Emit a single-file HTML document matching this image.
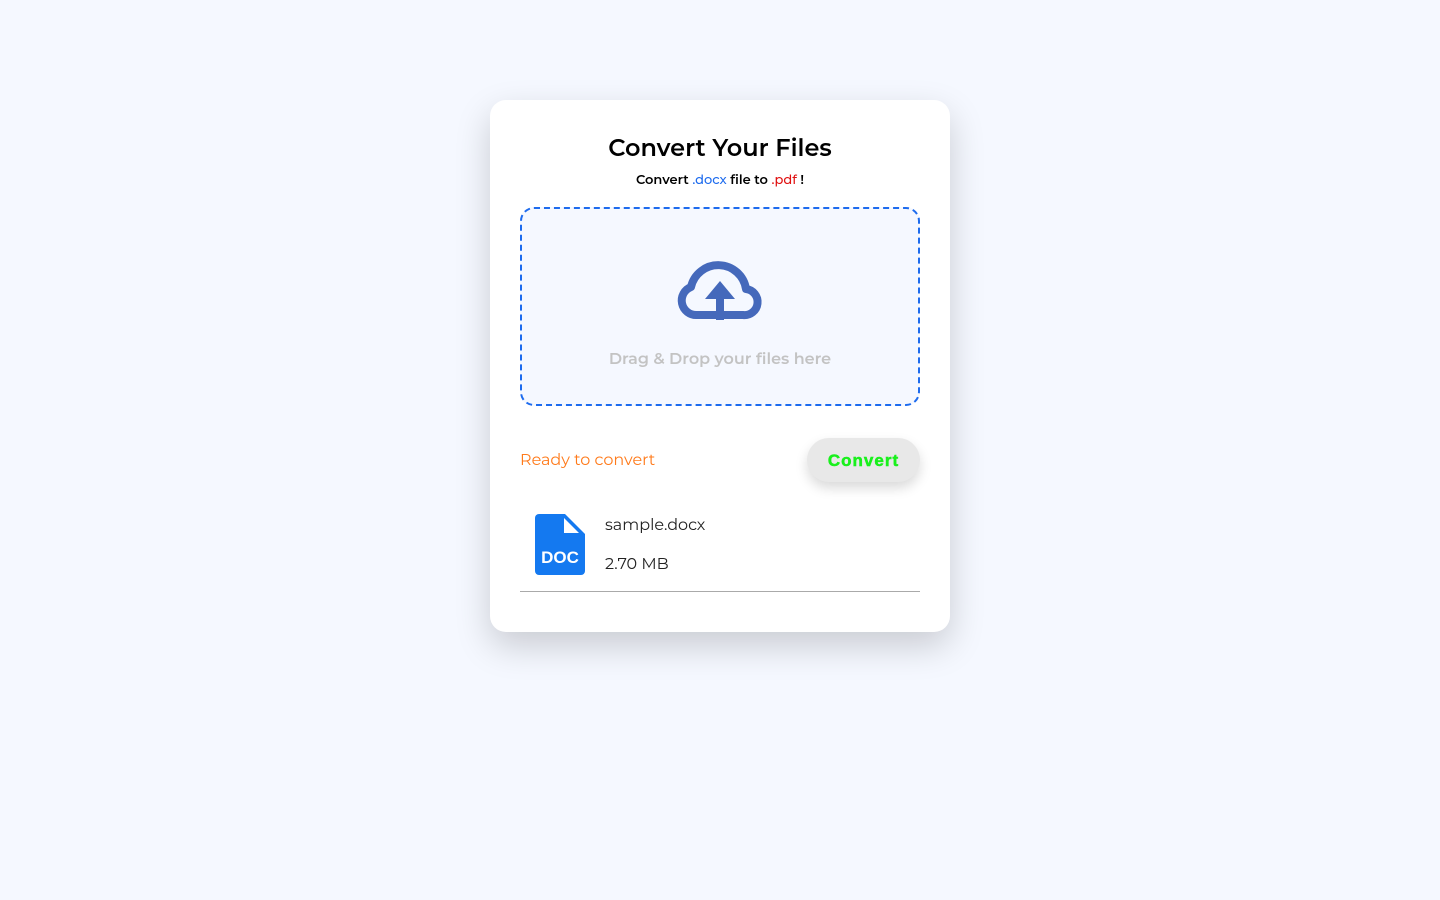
<!DOCTYPE html>
<html><head><meta charset="utf-8"><style>
html,body{margin:0;height:100%;background:#f5f8ff;font-family:"Montserrat","Liberation Sans",sans-serif}
.card{position:absolute;left:490px;top:100px;width:460px;height:532px;background:#fff;border-radius:16px;box-shadow:0 14px 35px rgba(0,0,0,0.18)}
h1{position:absolute;top:133px;left:0;width:100%;margin:0;text-align:center;font-size:24px;font-weight:600;color:#000;line-height:32px}
.sub{position:absolute;top:172px;left:0;width:100%;text-align:center;font-size:13px;font-weight:600;color:#000;line-height:16px}
.drop{position:absolute;left:30px;top:107px;width:396px;height:195px;border:2px dashed #1d6bee;border-radius:14px;background:#f5f8ff}
.dd{position:absolute;top:141px;width:100%;text-align:center;color:#c3c3c3;font-weight:600;font-size:16px}
.ready{position:absolute;left:30px;top:351px;color:#ff7a1a;font-size:16px}
.btn{position:absolute;left:317px;top:338px;width:113px;height:44px;border-radius:22px;background:#e8e8e8;box-shadow:0 6px 12px rgba(0,0,0,0.15);color:#19f01c;font-weight:900;font-size:17px;text-align:center;line-height:46px;font-family:"Liberation Sans",sans-serif;letter-spacing:1px;-webkit-text-stroke:0.5px #19f01c}
.name{position:absolute;left:115px;top:416px;font-size:16px;color:#222}
.size{position:absolute;left:115px;top:455px;font-size:16px;color:#222}
.hr{position:absolute;left:30px;top:491px;width:400px;height:1px;background:#aaa}
</style></head><body>
<div class="card">
<div class="drop">
<svg style="position:absolute;left:0;top:0" width="396" height="196" viewBox="525 209 396 196">
<path d="M700 315 H746 A13 13 0 0 0 749 289 A28 28 0 0 0 694 287 A14.5 14.5 0 0 0 700 315 Z" fill="none" stroke="#4569bb" stroke-width="8" stroke-linejoin="round"/>
<path d="M723 281 L738 299 H727 V320 H719 V299 H708 Z" fill="#4569bb"/>
</svg>
<div class="dd">Drag &amp; Drop your files here</div>
</div>
<div class="ready">Ready to convert</div>
<div class="btn">Convert</div>
<svg style="position:absolute;left:45px;top:413px" width="52" height="64" viewBox="0 0 52 64">
<path d="M4 1 H30 L50 21 V58 A4 4 0 0 1 46 62 H4 A4 4 0 0 1 0 58 V5 A4 4 0 0 1 4 1 Z" fill="#1479f0"/>
<path d="M29 5 L44 20 H29 Z" fill="#fff"/>
<text x="25" y="50" text-anchor="middle" font-family="Liberation Sans,sans-serif" font-weight="bold" font-size="17" fill="#fff">DOC</text>
</svg>
<div class="name">sample.docx</div>
<div class="size">2.70 MB</div>
<div class="hr"></div>
</div>
<h1>Convert Your Files</h1>
<div class="sub">Convert <span style="color:#1d6bee;font-weight:500">.docx</span> file to <span style="color:#e01010;font-weight:500">.pdf</span> !</div>
</body></html>
